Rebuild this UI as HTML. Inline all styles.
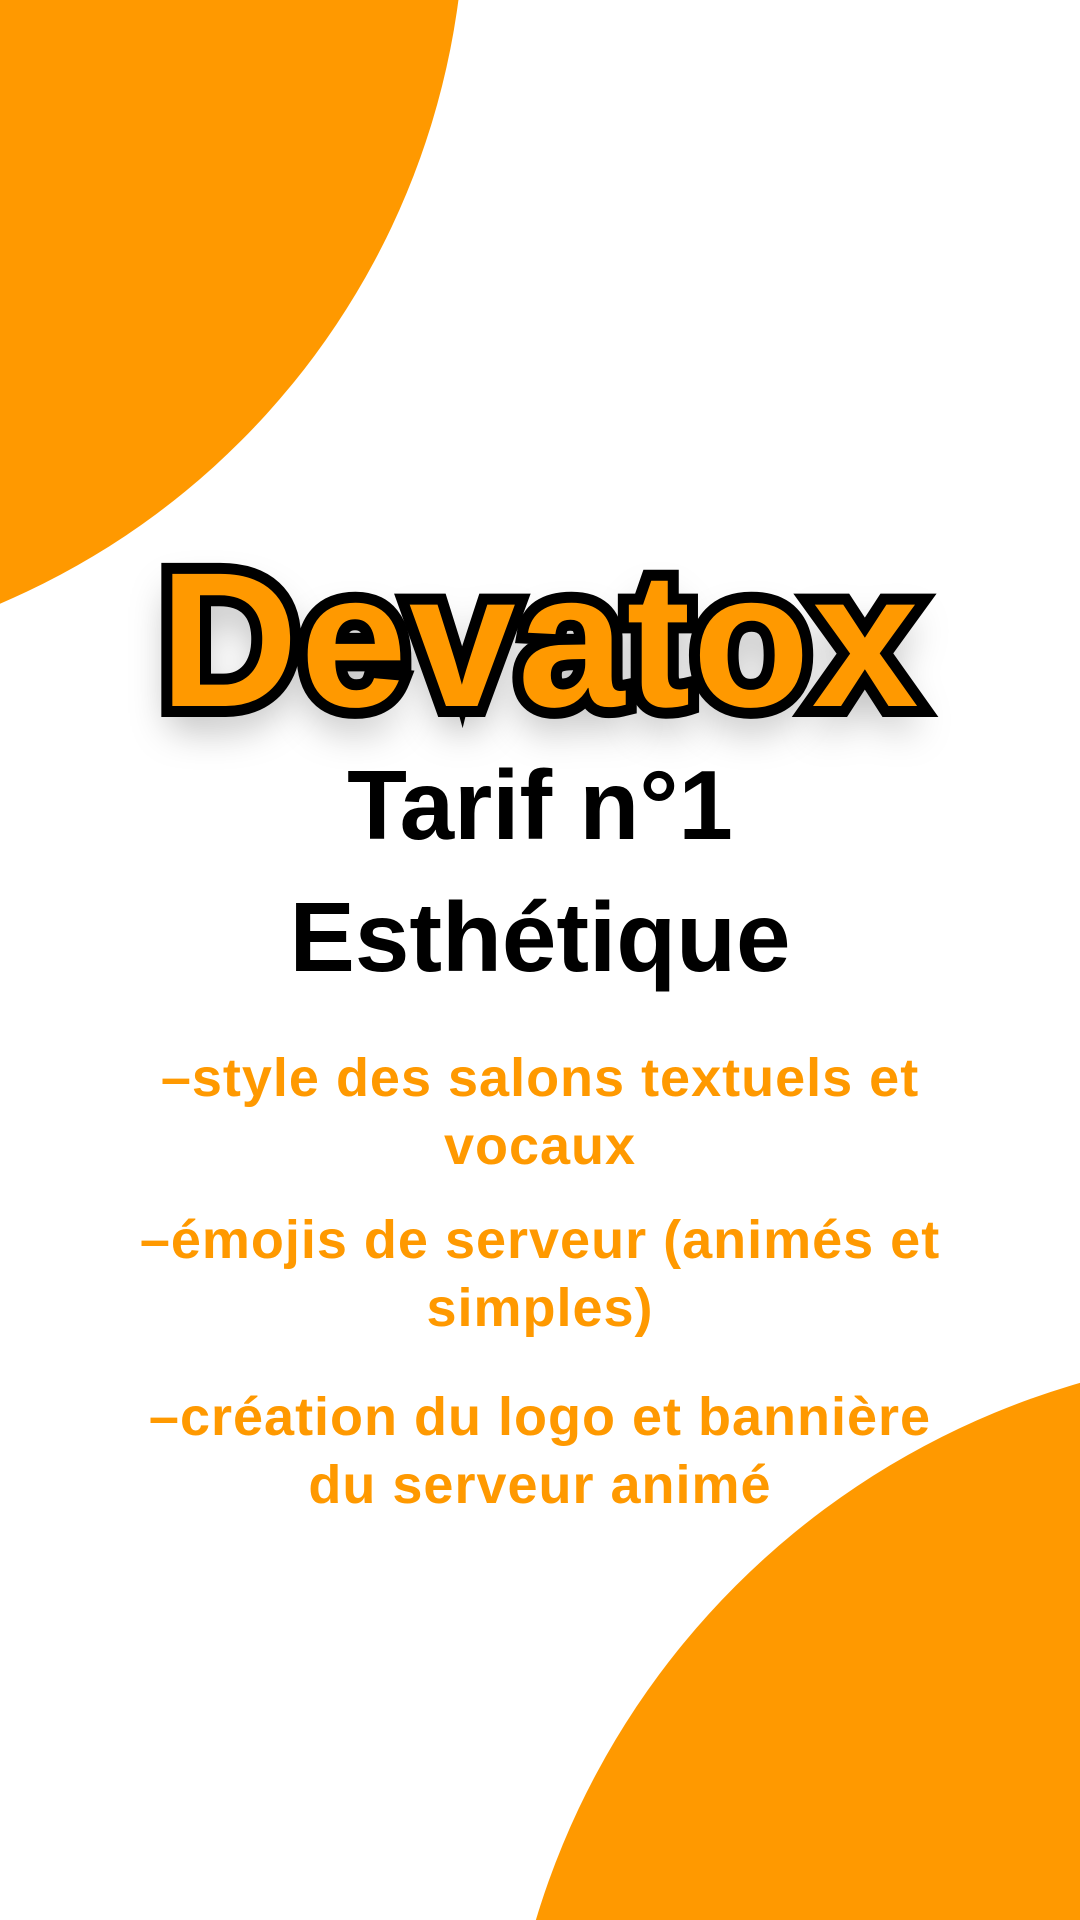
<!DOCTYPE html>
<html><head><meta charset="utf-8"><style>
html,body{margin:0;padding:0;width:1080px;height:1920px;overflow:hidden}
#w{width:1080px;height:1920px;background:#fff;position:relative;overflow:hidden;font-family:"Liberation Sans",sans-serif;font-weight:bold}
.c{position:absolute;border-radius:50%;background:#ff9900}
.t{position:absolute;left:0;width:1080px;text-align:center;white-space:nowrap}
h1{position:absolute;left:0;width:1080px;top:540px;margin:0;text-align:center;font-size:192px;line-height:200px;color:#ff9900;-webkit-text-stroke:22px #000;paint-order:stroke fill;letter-spacing:2px;text-shadow:0 20px 40px rgba(0,0,0,.35)}
.b{font-size:98px;color:#000;line-height:110px}
.o{font-size:54px;color:#ff9900;line-height:68px;letter-spacing:1px}
</style></head><body><div id="w">
<div class="c" style="left:-1065px;top:-865px;width:1530px;height:1530px"></div>
<div class="c" style="left:502px;top:1352px;width:1596px;height:1596px"></div>
<h1>Devatox</h1>
<div class="t b" style="top:750px">Tarif n°1</div>
<div class="t b" style="top:882px">Esthétique</div>
<div class="t o" style="top:1044px">–style des salons textuels et<br>vocaux</div>
<div class="t o" style="top:1206px">–émojis de serveur (animés et<br>simples)</div>
<div class="t o" style="top:1383px">–création du logo et bannière<br>du serveur animé</div>
</div></body></html>
